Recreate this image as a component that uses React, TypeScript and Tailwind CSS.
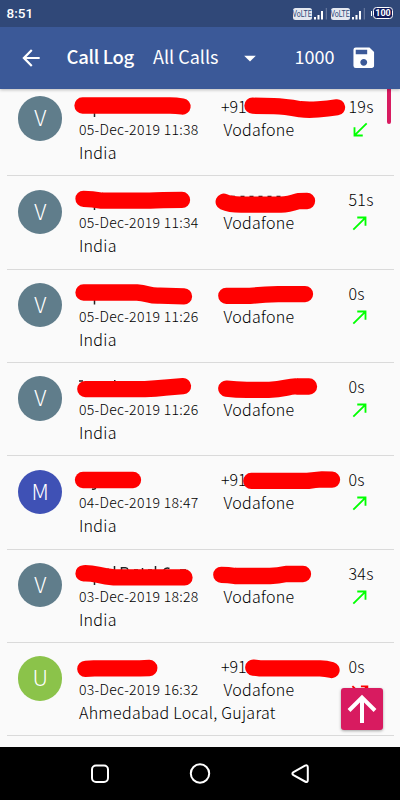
import React from 'react';
import { MdArrowBack, MdArrowDropDown, MdCallMade, MdCallMissedOutgoing, MdCallReceived, MdSave } from 'react-icons/md';
import { clsx } from 'clsx';

type Direction = 'in' | 'out' | 'missed';

interface CallEntry {
  letter: string;
  color: string;
  date: string;
  place: string;
  prefix?: string;
  duration: string;
  direction: Direction;
  marks: string[];
  ticks?: string;
}

const SLATE = 'bg-[#607d8b]';

const calls: CallEntry[] = [
  {
    letter: 'V',
    color: SLATE,
    date: '05-Dec-2019 11:38',
    place: 'India',
    prefix: '+91',
    duration: '19s',
    direction: 'in',
    marks: ['M82.5 22.5H170Q176 22.5 182.5 23.5', 'M252.5 22.7Q264 23 274 23.2T300 26.2Q308 27.2 318 26.4T337 24.3'],
    ticks: 'M94.5 30V34',
  },
  {
    letter: 'V',
    color: SLATE,
    date: '05-Dec-2019 11:34',
    place: 'India',
    duration: '51s',
    direction: 'out',
    marks: ['M83.5 22.8Q92 22.8 102 24.7H150Q160 23.9 182 23.9', 'M223.7 25.8Q230 28.6 241 28.6H281Q288 28.4 298 25.2L307 25'],
    ticks: 'M94.5 30V34M231 20.5h4M240.5 20.5h4M249.5 20.5h4M258.5 20.5h4M267.5 20.5h4M276.5 20.5h4',
  },
  {
    letter: 'V',
    color: SLATE,
    date: '05-Dec-2019 11:26',
    place: 'India',
    duration: '0s',
    direction: 'out',
    marks: ['M83.5 22.5H137Q142 22.8 148 24.4T160 25.6L184 26.3', 'M226.3 25.8H250Q262 24.8 278 24.2L305 24.1'],
    ticks: 'M94.5 30V34.5',
  },
  {
    letter: 'V',
    color: SLATE,
    date: '05-Dec-2019 11:26',
    place: 'India',
    duration: '0s',
    direction: 'out',
    marks: ['M85.3 26.1H145Q156 25.6 165 24.6L183 23.2', 'M226.3 25.6Q236 26.8 247 26.8H269Q278 26.7 286 24.8T297 23.5H309'],
    ticks: 'M79 18h4M114 17.8h1.5',
  },
  {
    letter: 'M',
    color: 'bg-[#3f51b5]',
    date: '04-Dec-2019 18:47',
    place: 'India',
    prefix: '+91',
    duration: '0s',
    direction: 'out',
    marks: ['M83 24H133', 'M251.3 24.9H308Q315 23.7 322 23.3L332 23.7'],
    ticks: 'M92 33Q95 34 96 31.2',
  },
  {
    letter: 'V',
    color: SLATE,
    date: '03-Dec-2019 18:28',
    place: 'India',
    duration: '34s',
    direction: 'out',
    marks: ['M83.5 23.3Q90 23 98 24.8T114 27.4H184.5', 'M221.3 24.8Q228 24.8 235 26H270Q278 25.7 286 24H303'],
    ticks:
      'M94.5 30V35M108 18.5v3M114.5 16v5M121.5 21V17.7h4q2 0 2.5 2M134 20h4M142.5 18v3M148 20h4M155.5 16v5M163.5 20.5q2-3.5 6 -2M180 20h6',
  },
  {
    letter: 'U',
    color: 'bg-[#8bc34a]',
    date: '03-Dec-2019 16:32',
    place: 'Ahmedabad Local, Gujarat',
    prefix: '+91',
    duration: '0s',
    direction: 'missed',
    marks: ['M85.3 25.8Q90 25.7 94 25.4H140L149.3 25', 'M253.3 24.6L260 25.3H320Q326 25.5 331.5 27'],
  },
];

function DirectionIcon({ direction }: { direction: Direction }) {
  if (direction === 'in') return <MdCallReceived size={22} color="#00ff00" />;
  if (direction === 'out') return <MdCallMade size={22} color="#00ff00" />;
  return <MdCallMissedOutgoing size={22} color="#ff0000" />;
}

function CallRow({ call }: { call: CallEntry }) {
  return (
    <div className="relative h-[93.35px]">
      <div className="flex pl-[18px] pt-[12px]">
        <div
          className={clsx(
            'mt-[1.4px] flex size-[44.4px] shrink-0 items-center justify-center rounded-full pb-[3px] text-[22px] font-light text-white',
            call.color
          )}
        >
          {call.letter}
        </div>
        <div className="ml-[16.6px] w-[142px] shrink-0 whitespace-nowrap leading-[23px]">
          <div className="h-[23px]" />
          <div className="text-[14px] tracking-[0.3px]">{call.date}</div>
          <div className="text-[16px] tracking-[0.27px]">{call.place}</div>
        </div>
        <div className="w-[127.5px] shrink-0 text-[16px] leading-[23px]">
          <div className="h-[23px]">{call.prefix}</div>
          <div className="pl-[2.5px] tracking-[0.27px]">Vodafone</div>
        </div>
        <div className="text-[16px] leading-[23px] tracking-[0.27px]">
          <div>{call.duration}</div>
          <div className="mt-[1.2px] ml-px">
            <DirectionIcon direction={call.direction} />
          </div>
        </div>
      </div>
      {/* Marker strokes over the private details */}
      <svg className="absolute left-0 top-0" width="400" height="93" fill="none">
        {call.ticks && <path d={call.ticks} stroke="#222" strokeWidth="1.5" />}
        {call.marks.map((d) => (
          <path key={d} d={d} stroke="#ff0000" strokeWidth="16.3" strokeLinecap="round" strokeLinejoin="round" />
        ))}
      </svg>
      <div className="absolute bottom-0 left-[7px] right-[6.5px] h-px bg-[#dadada]" />
    </div>
  );
}

function Signal() {
  return (
    <div className="flex items-center">
      <span className="flex h-[11.5px] w-[19px] items-center justify-center rounded-[2.5px] bg-[#e4e8f0] font-[Roboto] text-[9.5px] leading-none text-[#304878]">
        <span className="inline-block scale-x-[0.74]">VoLTE</span>
      </span>
      <svg width="15" height="12" viewBox="0 0 15 12" className="ml-px">
        <path d="M1 9h2v2.5H1zM4.5 7h2v4.5h-2zM8 3h2v8.5H8z" fill="#fff" />
        <path d="M12.8 0h1v11.5h-1z" fill="#7182a5" />
      </svg>
    </div>
  );
}

function StatusBar() {
  return (
    <div className="flex h-[27px] items-center bg-[#304878] pl-[6.5px] pr-[7px] font-[Roboto] text-white">
      <span className="text-[13.5px] font-medium">8:51</span>
      <div className="ml-auto flex items-center gap-[3.3px] pt-px">
        <Signal />
        <Signal />
      </div>
      <div className="mb-px ml-[4.5px] flex items-center gap-px">
        <span className="h-[5px] w-[1.5px] bg-white" />
        <span className="flex h-[12px] w-[20px] items-center justify-center rounded-[3.5px] border border-white bg-[#101c5c] text-[9px] font-bold leading-none">
          100
        </span>
      </div>
    </div>
  );
}

function Toolbar() {
  return (
    <div className="flex h-[62px] items-center bg-[#3b5998] text-[18px] text-white">
      <MdArrowBack size={26} className="ml-[18px]" />
      <span className="mb-[2px] ml-[22.5px] w-[86.5px] whitespace-nowrap text-[18.5px] font-medium tracking-[-0.3px]">Call Log</span>
      <span className="mb-[3px] w-[82.5px] whitespace-nowrap">All Calls</span>
      <MdArrowDropDown size={28} />
      <span className="mb-[3px] ml-[31px] w-[55.5px]">1000</span>
      <MdSave size={27.5} />
    </div>
  );
}

function NavBar() {
  return (
    <div className="flex h-[53px] shrink-0 items-center justify-center bg-black">
      <svg width="220" height="24" viewBox="90 0 220 24" fill="none" stroke="#fff" strokeWidth="2">
        <rect x="92" y="3.5" width="16" height="16.5" rx="4" />
        <circle cx="200" cy="11.5" r="9.2" />
        <path d="M293.5 10.2L305 3.7Q307.8 2.5 307.8 5.5V18Q307.8 21 305 19.5L293.5 13.1Q291.3 11.7 293.5 10.2Z" strokeLinejoin="round" />
      </svg>
    </div>
  );
}

export default function App() {
  return (
    <div className="flex h-[800px] w-[400px] flex-col overflow-hidden bg-[#fafafa] font-['Noto_Sans_CJK_SC',sans-serif] text-black">
      <header className="relative z-10 shrink-0 shadow-[0_1px_3px_rgba(0,0,0,0.25)]">
        <StatusBar />
        <Toolbar />
      </header>
      <main className="relative min-h-0 flex-1 overflow-hidden">
        <div className="-mt-[6.2px] font-light">
          {calls.map((call, i) => (
            <CallRow key={i} call={call} />
          ))}
        </div>
        <div className="absolute right-[9px] top-0 h-[35px] w-[4px] rounded-b-full bg-[#d81b60]" />
        <button
          type="button"
          className="absolute bottom-[17px] right-[17px] flex size-[42px] items-center justify-center rounded-[3px] bg-[#d81b60] shadow-[0_1px_3px_rgba(0,0,0,0.35)]"
        >
          <svg width="42" height="42" viewBox="0 0 42 42" fill="none" stroke="#fff" strokeWidth="4">
            <path d="M21 35V10M8 22.5L21 9.5L34 22.5" />
          </svg>
        </button>
      </main>
      <NavBar />
    </div>
  );
}
